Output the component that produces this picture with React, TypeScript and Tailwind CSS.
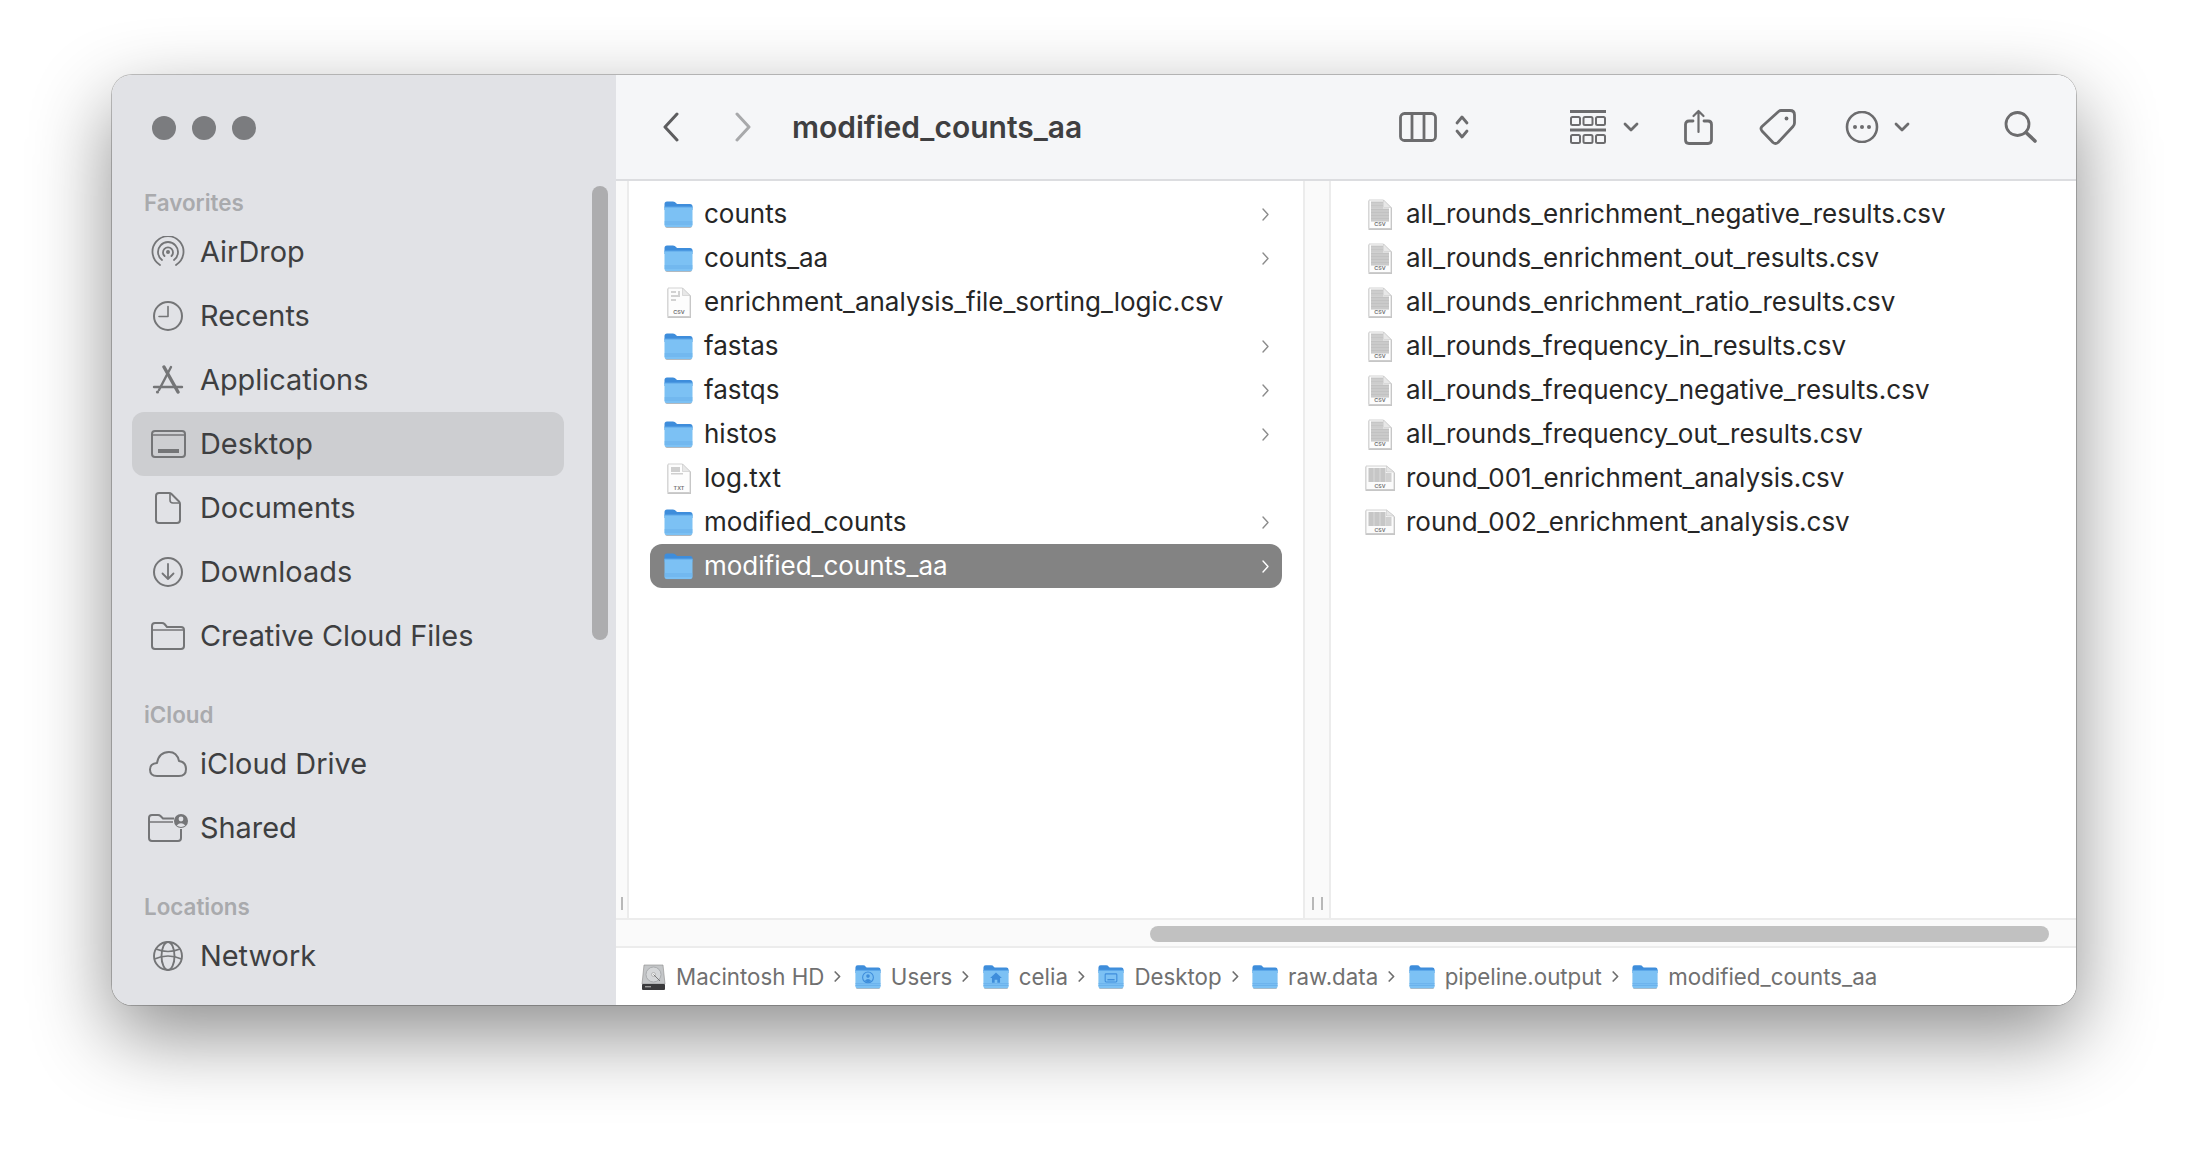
import React from 'react';

const stroke = '#747577';

function Folder({ w = 29, h = 27, glyph }: { w?: number; h?: number; glyph?: 'user' | 'home' | 'desktop' }) {
  return (
    <svg width={w} height={h} viewBox="0 0 29 27" className="flex-none">
      <path d="M1 24 Q1 27 3 27 H26 Q28 27 28 24 V8 H1 Z" fill="#7f8a95" opacity="0.6" />
      <path d="M0.5 3 Q0.5 0.5 3 0.5 H9 Q11 0.5 12 2 L13 3 H26 Q28.5 3 28.5 5.5 V9 H0.5 Z" fill="#3e8ddb" />
      <path d="M0.5 6 H28.5 V24 Q28.5 26 26.5 26 H2.5 Q0.5 26 0.5 24 Z" fill="#7cc1f4" />
      <rect x="0.5" y="5.5" width="28" height="1" fill="#5aa6e8" />
      <rect x="0.5" y="20.5" width="28" height="1" fill="#68b0ea" />
      <rect x="0.5" y="22.5" width="28" height="1" fill="#68b0ea" />
      {glyph === 'user' && (
        <g fill="#3e8ddb">
          <circle cx="14.5" cy="14" r="6" fill="none" stroke="#3e8ddb" strokeWidth="1.2" />
          <circle cx="14.5" cy="12.5" r="2" />
          <path d="M10.8 18 Q14.5 13.5 18.2 18 Q14.5 20.5 10.8 18 Z" />
        </g>
      )}
      {glyph === 'home' && <path d="M14.5 8.5 L21 14.5 H19 V20 H16 V16.5 H13 V20 H10 V14.5 H8 Z" fill="#3e8ddb" />}
      {glyph === 'desktop' && (
        <g fill="none" stroke="#3e8ddb" strokeWidth="1.2">
          <rect x="8" y="10" width="13" height="9" rx="1" />
          <path d="M10.5 16.5 H18.5" strokeWidth="1.6" />
        </g>
      )}
    </svg>
  );
}

function DocIcon({ label, tone }: { label: string; tone: 'dense' | 'light' | 'txt' }) {
  return (
    <svg width="24" height="31" viewBox="0 0 24 31" className="flex-none">
      <path d="M0.5 2 H16 L24 9 V31 H0.5 Z" fill="#a8a8a8" opacity="0.65" />
      <path d="M1 1 H15.5 L23 8.5 V29 Q23 29.5 22.5 29.5 H1.5 Q1 29.5 1 29 Z" fill="#fdfdfd" stroke="#c8c8c8" strokeWidth="0.8" />
      <path d="M15.5 1 V8.5 H23 Z" fill="#e8e8e8" stroke="#c8c8c8" strokeWidth="0.6" />
      {tone === 'dense' && (
        <g>
          <rect x="3" y="2.5" width="12" height="7" fill="#c6c6c6" />
          <rect x="3" y="9.5" width="18" height="13" fill="#c2c2c2" />
          <path d="M3 5 H15 M3 8 H15 M3 12 H21 M3 15 H21 M3 18 H21 M3 21 H21" stroke="#dadada" strokeWidth="0.7" />
        </g>
      )}
      {tone === 'light' && (
        <g fill="#d2d2d2">
          <rect x="4" y="4" width="5" height="2" />
          <rect x="4" y="8" width="7" height="2" />
          <rect x="4" y="12" width="5" height="2" />
          <rect x="11" y="4" width="2" height="6" />
        </g>
      )}
      {tone === 'txt' && (
        <g fill="#cfcfcf">
          <rect x="4" y="4" width="9" height="5" />
          <rect x="4" y="10" width="12" height="1.5" />
        </g>
      )}
      <text x="12" y="27" textAnchor="middle" fontSize="5.4" fontWeight="600" fill="#6f6f6f" fontFamily="Inter, sans-serif">
        {label}
      </text>
    </svg>
  );
}

function WideDocIcon() {
  return (
    <svg width="30" height="26" viewBox="0 0 30 26" className="flex-none">
      <path d="M0.5 2 H22 L30 8 V26 H0.5 Z" fill="#a8a8a8" opacity="0.65" />
      <path d="M1 1 H21.5 L29 7 V24.5 H1 Z" fill="#fbfbfb" stroke="#c8c8c8" strokeWidth="0.8" />
      <path d="M21.5 1 V7 H29 Z" fill="#e6e6e6" stroke="#c8c8c8" strokeWidth="0.6" />
      <rect x="3.5" y="3" width="17" height="14" fill="#c6c6c6" />
      <rect x="20.5" y="8" width="6" height="9" fill="#d0d0d0" />
      <path d="M9 3 V17 M15 3 V17" stroke="#e0e0e0" strokeWidth="0.8" />
      <text x="15" y="22.5" textAnchor="middle" fontSize="5.2" fontWeight="600" fill="#6f6f6f" fontFamily="Inter, sans-serif">
        CSV
      </text>
    </svg>
  );
}

function DiskIcon() {
  return (
    <svg width="25" height="26" viewBox="0 0 25 26" className="flex-none mr-[10px]">
      <path d="M3 1 H22 L24 20 H1 Z" fill="#c4c6c8" stroke="#8a8a8a" strokeWidth="0.6" />
      <circle cx="12.5" cy="10.5" r="7.5" fill="#d5d7d9" stroke="#a0a2a4" strokeWidth="0.8" />
      <circle cx="12.5" cy="10.5" r="2" fill="#eceded" stroke="#9a9a9a" strokeWidth="0.6" />
      <path d="M12.5 10.5 L19 17" stroke="#707070" strokeWidth="0.9" />
      <rect x="1" y="20" width="23" height="6" rx="1" fill="#3a3a3c" />
      <rect x="4" y="22" width="6" height="1.4" fill="#9a9a9a" />
    </svg>
  );
}

function RowChevron({ color = '#8c8c8c' }: { color?: string }) {
  return (
    <svg width="7" height="13" viewBox="0 0 7 13" className="flex-none">
      <path d="M1 1 L6 6.5 L1 12" fill="none" stroke={color} strokeWidth="1.4" strokeLinecap="round" strokeLinejoin="round" />
    </svg>
  );
}

function PathChevron() {
  return (
    <svg width="7" height="11" viewBox="0 0 7 11" className="flex-none ml-[10px] mr-[13.5px]">
      <path d="M1.2 1 L5.6 5.5 L1.2 10" fill="none" stroke="#6e6e6e" strokeWidth="1.7" strokeLinecap="round" strokeLinejoin="round" />
    </svg>
  );
}

const sideIcons: Record<string, React.ReactNode> = {
  AirDrop: (
    <svg width="34" height="32" viewBox="0 0 34 32" fill="none" stroke={stroke} strokeWidth="1.8" strokeLinecap="round">
      <path d="M9 29 A15.5 15.5 0 1 1 25 29" />
      <path d="M11 24 A10 10 0 1 1 23 24" />
      <path d="M13.5 20 A5 5 0 1 1 20.5 20" />
      <circle cx="17" cy="16" r="2" fill={stroke} stroke="none" />
    </svg>
  ),
  Recents: (
    <svg width="32" height="32" viewBox="0 0 32 32" fill="none" stroke={stroke} strokeWidth="2" strokeLinecap="round" strokeLinejoin="round">
      <circle cx="16" cy="16" r="14" />
      <path d="M16 6.5 V16.5 H7" strokeWidth="1.6" />
    </svg>
  ),
  Applications: (
    <svg width="32" height="30" viewBox="0 0 32 30" fill="none" stroke={stroke} strokeLinecap="round">
      <path d="M12 2 L26 27" strokeWidth="3.4" />
      <path d="M19 2 L7 25" strokeWidth="2.4" />
      <path d="M2 22 H30" strokeWidth="2.4" />
      <circle cx="5.5" cy="27" r="1.6" fill={stroke} stroke="none" />
    </svg>
  ),
  Desktop: (
    <svg width="35" height="28" viewBox="0 0 35 28" fill="none" stroke={stroke} strokeWidth="2">
      <rect x="1" y="1" width="33" height="26" rx="3" />
      <path d="M1 5 H34" strokeWidth="1.4" />
      <rect x="7" y="19" width="21" height="4" fill={stroke} stroke="none" />
    </svg>
  ),
  Documents: (
    <svg width="26" height="32" viewBox="0 0 26 32" fill="none" stroke={stroke} strokeWidth="2" strokeLinejoin="round">
      <path d="M4 1 H14 Q15.5 1 16.5 2 L24 9.5 Q25 10.5 25 12 V28 Q25 31 22 31 H4 Q1 31 1 28 V4 Q1 1 4 1 Z" />
      <path d="M15 1.5 V8 Q15 11 18 11 H24.5" strokeWidth="1.6" />
    </svg>
  ),
  Downloads: (
    <svg width="32" height="32" viewBox="0 0 32 32" fill="none" stroke={stroke} strokeWidth="2" strokeLinecap="round" strokeLinejoin="round">
      <circle cx="16" cy="16" r="14" />
      <path d="M16 8 V23 M10.5 17.5 L16 23 L21.5 17.5" strokeWidth="1.8" />
    </svg>
  ),
  'Creative Cloud Files': (
    <svg width="34" height="28" viewBox="0 0 34 28" fill="none" stroke={stroke} strokeWidth="2" strokeLinejoin="round">
      <path d="M1 4 Q1 1 4 1 H11 Q12.5 1 13.5 2 L16 5 H30 Q33 5 33 8 V24 Q33 27 30 27 H4 Q1 27 1 24 Z" />
      <path d="M1 8 H33" strokeWidth="1.5" />
    </svg>
  ),
  'iCloud Drive': (
    <svg width="38" height="26" viewBox="0 0 38 26" fill="none" stroke={stroke} strokeWidth="2" strokeLinejoin="round">
      <path d="M8 25 Q1 25 1 18.5 Q1 12.5 8 12 Q10 1 20 1 Q28 1 30 10 Q37 11 37 18 Q37 25 30 25 Z" />
    </svg>
  ),
  Shared: (
    <svg width="40" height="28" viewBox="0 0 40 28" fill="none" stroke={stroke} strokeWidth="2" strokeLinejoin="round">
      <path d="M26 4.5 H15 L12.5 2 Q11.5 1 10 1 H4 Q1 1 1 4 V24 Q1 27 4 27 H30 Q33 27 33 24 V15" />
      <path d="M1 8 H25" strokeWidth="1.5" />
      <circle cx="33" cy="7" r="7" fill={stroke} stroke="none" />
      <circle cx="33" cy="5" r="2.4" fill="#e1e2e6" stroke="none" />
      <path d="M28.6 11.5 Q33 6.8 37.4 11.5 Q33 14.4 28.6 11.5 Z" fill="#e1e2e6" stroke="none" />
    </svg>
  ),
  Network: (
    <svg width="32" height="32" viewBox="0 0 32 32" fill="none" stroke={stroke} strokeWidth="1.9">
      <circle cx="16" cy="16" r="14" />
      <ellipse cx="16" cy="16" rx="6.5" ry="14" />
      <path d="M4 9 Q16 14 28 9 M2.5 19 Q16 13 29.5 19" strokeWidth="1.6" />
    </svg>
  ),
};

const sections = [
  { title: 'Favorites', items: ['AirDrop', 'Recents', 'Applications', 'Desktop', 'Documents', 'Downloads', 'Creative Cloud Files'] },
  { title: 'iCloud', items: ['iCloud Drive', 'Shared'] },
  { title: 'Locations', items: ['Network'] },
];

const firstColumn: { name: string; kind: 'folder' | 'csv' | 'txt' }[] = [
  { name: 'counts', kind: 'folder' },
  { name: 'counts_aa', kind: 'folder' },
  { name: 'enrichment_analysis_file_sorting_logic.csv', kind: 'csv' },
  { name: 'fastas', kind: 'folder' },
  { name: 'fastqs', kind: 'folder' },
  { name: 'histos', kind: 'folder' },
  { name: 'log.txt', kind: 'txt' },
  { name: 'modified_counts', kind: 'folder' },
  { name: 'modified_counts_aa', kind: 'folder' },
];

const secondColumn = [
  'all_rounds_enrichment_negative_results.csv',
  'all_rounds_enrichment_out_results.csv',
  'all_rounds_enrichment_ratio_results.csv',
  'all_rounds_frequency_in_results.csv',
  'all_rounds_frequency_negative_results.csv',
  'all_rounds_frequency_out_results.csv',
  'round_001_enrichment_analysis.csv',
  'round_002_enrichment_analysis.csv',
];

const pathItems: { name: string; glyph?: 'user' | 'home' | 'desktop' }[] = [
  { name: 'Users', glyph: 'user' },
  { name: 'celia', glyph: 'home' },
  { name: 'Desktop', glyph: 'desktop' },
  { name: 'raw.data' },
  { name: 'pipeline.output' },
  { name: 'modified_counts_aa' },
];

function Sidebar() {
  return (
    <aside className="relative w-[504px] flex-none bg-[#e1e2e6] overflow-hidden">
      <div className="flex gap-4 pl-10 pt-[41px] h-[111px]">
        <span className="w-6 h-6 rounded-full bg-[#7b7c7f]" />
        <span className="w-6 h-6 rounded-full bg-[#7b7c7f]" />
        <span className="w-6 h-6 rounded-full bg-[#7b7c7f]" />
      </div>
      <div className="flex flex-col gap-[30px]">
        {sections.map(section => (
          <div key={section.title}>
            <div className="h-[34px] pl-8 flex items-center text-[22.4px] font-semibold text-[#a9aaad]">{section.title}</div>
            {section.items.map(item => (
              <div
                key={item}
                className={`h-16 mx-5 w-[432px] flex items-center rounded-[12px] ${item === 'Desktop' ? 'bg-[#cdced1]' : ''}`}
              >
                <div className="w-10 ml-4 flex-none flex items-center justify-center">{sideIcons[item]}</div>
                <span className="ml-3 text-[28.9px] text-[#3e3f41] whitespace-nowrap">{item}</span>
              </div>
            ))}
          </div>
        ))}
      </div>
      <div className="absolute left-[480px] top-[111px] w-4 h-[454px] rounded-full bg-[#adadaf]" />
    </aside>
  );
}

function Toolbar() {
  const s = '#6c6c6e';
  return (
    <div className="h-[106px] flex-none flex items-center bg-[#f5f6f8] border-b-2 border-[#dcdde0] pr-[39px]">
      <svg width="18" height="30" viewBox="0 0 18 30" className="ml-[46px] flex-none">
        <path d="M15 2 L3 15 L15 28" fill="none" stroke="#5d5d5f" strokeWidth="3" strokeLinecap="round" strokeLinejoin="round" />
      </svg>
      <svg width="18" height="30" viewBox="0 0 18 30" className="ml-[54px] flex-none">
        <path d="M3 2 L15 15 L3 28" fill="none" stroke="#a8a9ab" strokeWidth="3" strokeLinecap="round" strokeLinejoin="round" />
      </svg>
      <span className="ml-[40px] mt-[1px] text-[30px] font-semibold text-[#3f3f41] whitespace-nowrap">modified_counts_aa</span>
      <svg width="38" height="30" viewBox="0 0 38 30" fill="none" stroke={s} strokeWidth="2.8" className="ml-auto flex-none">
        <rect x="1.5" y="1.5" width="35" height="27" rx="4" />
        <path d="M13 1.5 V28.5 M25 1.5 V28.5" />
      </svg>
      <svg width="14" height="26" viewBox="0 0 14 26" fill="none" stroke={s} strokeWidth="2.8" strokeLinecap="round" strokeLinejoin="round" className="ml-[18px] flex-none">
        <path d="M2 9 L7 3 L12 9 M2 17 L7 23 L12 17" />
      </svg>
      <svg width="36" height="34" viewBox="0 0 36 34" fill="none" stroke={s} className="ml-[101px] flex-none">
        <path d="M0 1.5 H36 M0 20 H36" strokeWidth="2.8" />
        <g strokeWidth="2">
          <rect x="1" y="7" width="9" height="8" rx="1.5" />
          <rect x="13.5" y="7" width="9" height="8" rx="1.5" />
          <rect x="26" y="7" width="9" height="8" rx="1.5" />
          <rect x="1" y="25" width="9" height="8" rx="1.5" />
          <rect x="13.5" y="25" width="9" height="8" rx="1.5" />
          <rect x="26" y="25" width="9" height="8" rx="1.5" />
        </g>
      </svg>
      <svg width="16" height="10" viewBox="0 0 16 10" fill="none" stroke={s} strokeWidth="2.8" strokeLinecap="round" strokeLinejoin="round" className="ml-[17px] flex-none">
        <path d="M2 2 L8 8 L14 2" />
      </svg>
      <svg width="29" height="36" viewBox="0 0 29 36" fill="none" stroke={s} strokeWidth="2.8" strokeLinecap="round" strokeLinejoin="round" className="ml-[45px] flex-none">
        <path d="M9 12 H5 Q1.5 12 1.5 15.5 V31 Q1.5 34.5 5 34.5 H24 Q27.5 34.5 27.5 31 V15.5 Q27.5 12 24 12 H20" />
        <path d="M14.5 23 V2 M9.5 7 L14.5 2 L19.5 7" strokeWidth="2.2" />
      </svg>
      <svg width="37" height="36" viewBox="0 0 37 36" fill="none" stroke={s} strokeWidth="2.8" strokeLinejoin="round" className="ml-[46px] flex-none">
        <path d="M19 3 Q20 1.5 22 1.5 H31 Q35.5 1.5 35.5 6 V14 Q35.5 16 34 17.5 L19 33.5 Q16.5 35.5 14 33.5 L3 22 Q1 19.5 3 17.5 Z" />
        <circle cx="27.5" cy="9.5" r="1.9" fill={s} stroke="none" />
      </svg>
      <svg width="34" height="32" viewBox="0 0 34 32" fill="none" stroke={s} strokeWidth="2.6" className="ml-[49px] flex-none">
        <circle cx="17" cy="16" r="15" />
        <circle cx="10" cy="16" r="2" fill={s} stroke="none" />
        <circle cx="17" cy="16" r="2" fill={s} stroke="none" />
        <circle cx="24" cy="16" r="2" fill={s} stroke="none" />
      </svg>
      <svg width="16" height="10" viewBox="0 0 16 10" fill="none" stroke={s} strokeWidth="2.8" strokeLinecap="round" strokeLinejoin="round" className="ml-[15px] flex-none">
        <path d="M2 2 L8 8 L14 2" />
      </svg>
      <svg width="33" height="32" viewBox="0 0 33 32" fill="none" stroke={s} strokeLinecap="round" className="ml-[94px] flex-none">
        <circle cx="13.5" cy="13" r="11.5" strokeWidth="2.8" />
        <path d="M22 21.5 L31 30" strokeWidth="3.6" />
      </svg>
    </div>
  );
}

function ColumnHandle({ double }: { double?: boolean }) {
  return (
    <div className="absolute bottom-2 left-0 right-0 h-[13px] flex justify-center gap-[7px]">
      <span className="w-[2px] h-full bg-[#b8b8b8]" />
      {double && <span className="w-[2px] h-full bg-[#b8b8b8]" />}
    </div>
  );
}

function Columns() {
  return (
    <div className="flex-1 flex min-h-0 bg-white">
      <div className="relative w-[13px] flex-none bg-[#fafafa] border-r-2 border-[#ececec]">
        <ColumnHandle />
      </div>
      <div className="w-[674px] flex-none pt-[11px] px-[21px]">
        {firstColumn.map(item => {
          const selected = item.name === 'modified_counts_aa';
          return (
            <div
              key={item.name}
              className={`h-11 flex items-center rounded-[12px] pl-[14px] pr-[13px] ${selected ? 'bg-[#838383] text-white' : 'text-[#262626]'}`}
            >
              <div className="w-[29px] flex-none flex justify-center">
                {item.kind === 'folder' ? <Folder /> : <DocIcon label={item.kind === 'csv' ? 'CSV' : 'TXT'} tone={item.kind === 'csv' ? 'light' : 'txt'} />}
              </div>
              <span className="ml-[11px] pb-[2px] flex-1 text-[26px] whitespace-nowrap">{item.name}</span>
              {item.kind === 'folder' && <RowChevron color={selected ? '#ffffff' : '#8c8c8c'} />}
            </div>
          );
        })}
      </div>
      <div className="relative w-7 flex-none bg-[#fafafa] border-x-2 border-[#ececec]">
        <ColumnHandle double />
      </div>
      <div className="flex-1 pt-[11px] pl-[34px]">
        {secondColumn.map(name => (
          <div key={name} className="h-11 flex items-center text-[#262626]">
            <div className="w-[30px] flex-none flex justify-center">
              {name.startsWith('round') ? <WideDocIcon /> : <DocIcon label="CSV" tone="dense" />}
            </div>
            <span className="ml-[11px] pb-[2px] text-[26px] whitespace-nowrap">{name}</span>
          </div>
        ))}
      </div>
    </div>
  );
}

function Scroller() {
  return (
    <div className="h-[30px] flex-none flex items-center justify-end bg-[#fafafa] border-y-2 border-[#ececec] pt-[2px] pr-[27px]">
      <div className="w-[899px] h-4 rounded-full bg-[#c1c1c1]" />
    </div>
  );
}

function PathBar() {
  return (
    <div className="h-[57px] flex-none flex items-center bg-white pl-[25px] text-[22.3px] text-[#707070] whitespace-nowrap">
      <DiskIcon />
      <span>Macintosh HD</span>
      {pathItems.map(item => (
        <React.Fragment key={item.name}>
          <PathChevron />
          <Folder w={26} h={26} glyph={item.glyph} />
          <span className="ml-[10px]">{item.name}</span>
        </React.Fragment>
      ))}
    </div>
  );
}

export default function App() {
  return (
    <div className="w-[2188px] h-[1152px] bg-white overflow-hidden pl-[112px] pt-[75px] [font-family:Inter,'Noto_Sans',sans-serif]">
      <div className="w-[1964px] h-[930px] flex rounded-[20px] overflow-hidden shadow-[0_30px_80px_rgba(0,0,0,0.45),0_0_0_1px_rgba(0,0,0,0.22)]">
        <Sidebar />
        <main className="flex-1 flex flex-col min-w-0 bg-white">
          <Toolbar />
          <Columns />
          <Scroller />
          <PathBar />
        </main>
      </div>
    </div>
  );
}
